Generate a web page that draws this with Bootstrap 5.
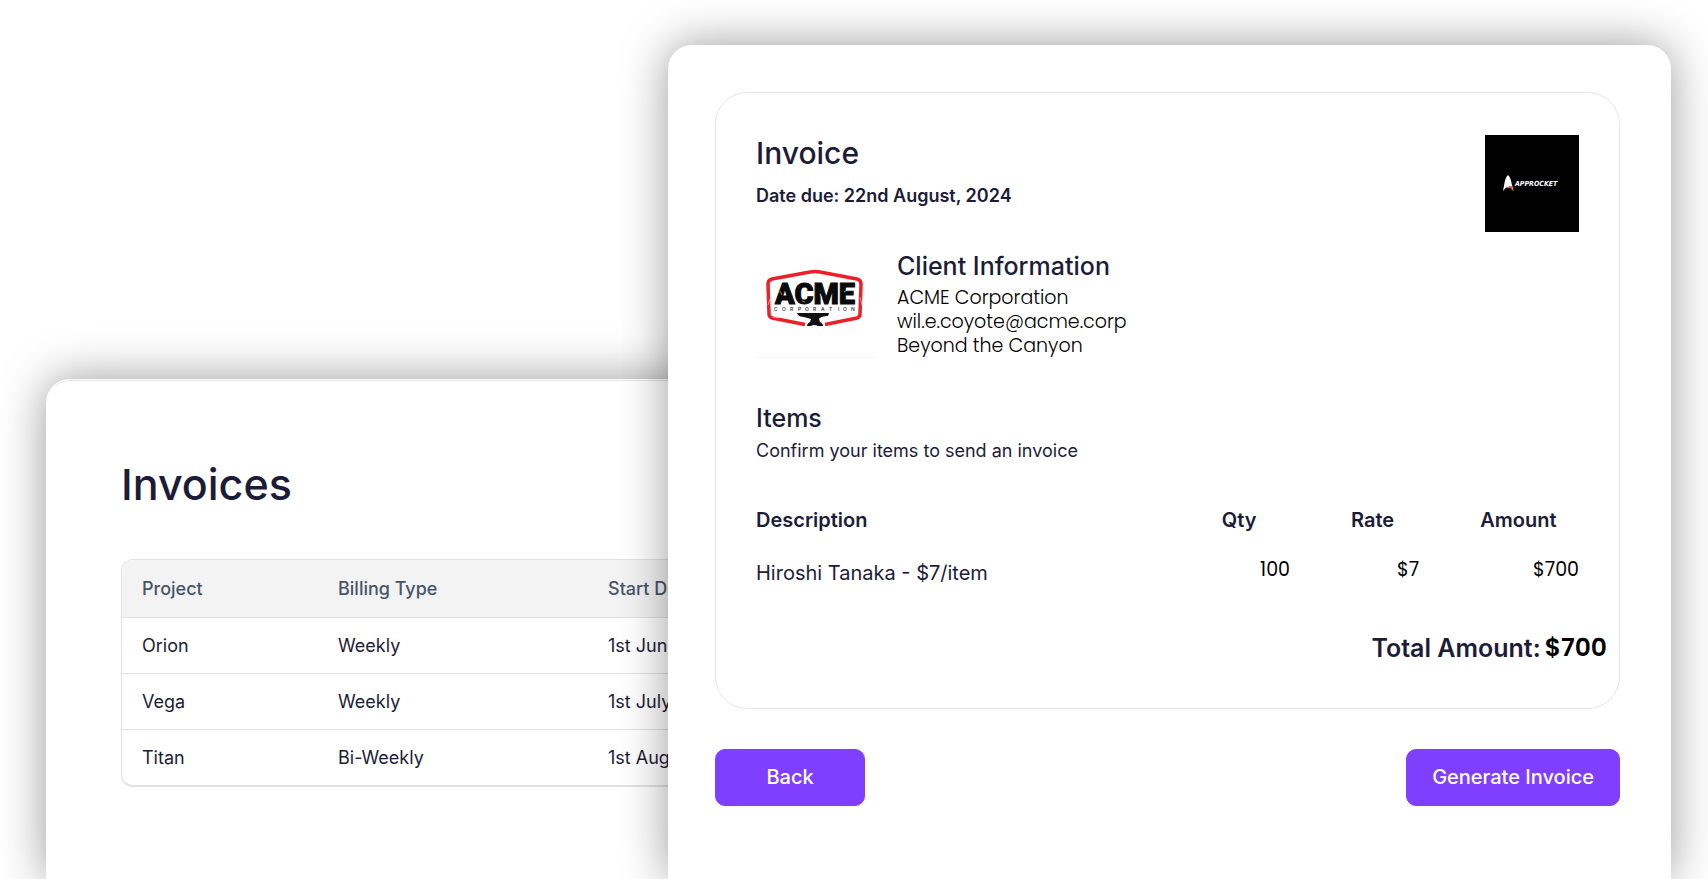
<!DOCTYPE html>
<html lang="en">
<head>
<meta charset="utf-8">
<meta name="viewport" content="width=device-width, initial-scale=1">
<title>Invoices</title>
<link href="https://cdn.jsdelivr.net/npm/bootstrap@5.3.0/dist/css/bootstrap.min.css" rel="stylesheet">
<style>
  body { font-family: Inter, sans-serif; color: #1c1c38; background: #fff; overflow-x: hidden; }
  .stage { display: grid; grid-template-columns: 622fr 1003fr; padding: 45px 37px 0 46px; }
  .sheet { grid-row: 1; background: #fff; border-radius: 24px 24px 0 0; box-shadow: 0 0 48px rgba(0, 0, 0, .4); }
  .sheet-list { grid-column: 1 / 3; margin: 334px 45% 0 0; padding: 78px 0 0 75px; box-shadow: 0 0 48px rgba(0, 0, 0, .4), inset 0 2px 0 -1px #e5e5e5; border-top: 1px solid #fff; }
  .sheet-invoice { grid-column: 2; z-index: 1; padding: 47px 51px 72px 47px; }

  .page-title { font-size: 43px; line-height: 52px; font-weight: 500; margin-bottom: 49px; }
  .list-frame { border: 1px solid #e2e2e4; border-bottom-width: 2px; border-right: 0; border-radius: 12px 0 0 12px; overflow: hidden; }
  .project-table { font-size: 18px; line-height: 24px; table-layout: fixed; white-space: nowrap; color: inherit; }
  .project-table th, .project-table td { padding: 16px 20px 15px; border-bottom: 1px solid #e2e2e4; color: inherit; background: transparent; }
  .project-table th { padding: 17px 20px 16px; font-weight: 500; color: #475569; background: #f3f3f3; }
  .project-table tbody tr:last-child td { border-bottom: 0; }
  .col-project { width: 196px; }
  .col-billing { width: 270px; }

  .invoice-frame { border: 1px solid #e5e5e7; border-radius: 32px; padding: 42px 40px 45px; }
  .invoice-title { font-size: 30px; line-height: 36px; font-weight: 500; margin-bottom: 13px; }
  .due-date { font-size: 18px; line-height: 24px; font-weight: 600; }
  .section-title { font-size: 25px; line-height: 30px; font-weight: 500; margin-bottom: 5px; }
  .entry { font-family: Poppins, Inter, sans-serif; color: #000; }
  .client-lines { font-size: 19px; line-height: 24px; font-weight: 300; }
  .client-row { margin-top: 17px; gap: 21px; }
  .items-head { margin-top: 45px; }
  .items-head .section-title { margin-bottom: 6px; }
  .items-note { font-size: 18px; line-height: 24px; }
  .items-table { font-size: 20px; line-height: 24px; margin-top: 45px; table-layout: fixed; width: 100%; }
  .items-table th { font-weight: 600; padding: 0; }
  .items-table td { padding: 29px 0 0; }
  .items-table td.entry { padding: 26px 0 3px; text-align: right; font-size: 19px; }
  .items-table td.inset-end { padding-right: 61px; }
  .col-desc { width: 56.6%; }
  .col-num { width: 15.7%; }
  .total-row { font-size: 25px; line-height: 30px; font-weight: 600; margin: 48px -28px 0 0; gap: 4px; }
  .actions { margin-top: 40px; }
  .btn-violet { --bs-btn-bg: #803fff; --bs-btn-color: #fff; --bs-btn-border-color: #803fff; --bs-btn-hover-bg: #6d2df0; --bs-btn-hover-color: #fff; --bs-btn-active-bg: #5f22dd; --bs-btn-active-color: #fff;
    font-size: 20px; line-height: 24px; font-weight: 500; border-radius: 10px; padding: 15px 25px 16px; min-width: 150px; }
</style>
</head>
<body>
<main class="stage min-vh-100">
  <section class="sheet sheet-list" aria-labelledby="list-title">
    <h1 class="page-title" id="list-title">Invoices</h1>
    <div class="list-frame">
      <table class="table project-table mb-0">
        <colgroup><col class="col-project"><col class="col-billing"><col></colgroup>
        <thead><tr><th scope="col">Project</th><th scope="col">Billing Type</th><th scope="col">Start Date</th></tr></thead>
        <tbody>
          <tr><td>Orion</td><td>Weekly</td><td>1st June</td></tr>
          <tr><td>Vega</td><td>Weekly</td><td>1st July</td></tr>
          <tr><td>Titan</td><td>Bi-Weekly</td><td>1st August</td></tr>
        </tbody>
      </table>
    </div>
  </section>

  <section class="sheet sheet-invoice" aria-labelledby="invoice-title">
    <div class="invoice-frame">
      <header class="d-flex justify-content-between align-items-start">
        <div>
          <h2 class="invoice-title" id="invoice-title">Invoice</h2>
          <p class="due-date mb-0">Date due: 22nd August, 2024</p>
        </div>
        <svg class="flex-shrink-0 d-block" width="94" height="97" viewBox="0 0 94 97" role="img" aria-label="AppRocket">
          <rect width="94" height="97" fill="#000"/>
          <path d="M23 40c2 1.500 3 5 3.500 8l2 8-3.500-3.500h-4L18 56l1.500-8c.5-3 1.500-6.500 3.500-8z" fill="#fff"/>
          <path d="M23 51.500l3.500-.5 2 5.500-3-3.500z" fill="#e8391d"/>
          <text x="30" y="51" font-family="'DejaVu Sans Condensed', 'DejaVu Sans', sans-serif" font-size="7" font-weight="700" font-style="italic" fill="#fff">APPROCKET</text>
        </svg>
      </header>

      <div class="client-row d-flex align-items-end">
        <svg class="flex-shrink-0 d-block" width="120" height="109" viewBox="0 0 120 109" role="img" aria-label="ACME Corporation">
          <path d="M49 75.500L16 69q-3-1-3-4l-1-30q0-4 4-5l38-7q5-1 10 0l37 7q4 1 4 5l-1 30q0 3-3 4l-32 6.500" fill="none" stroke="#ea2128" stroke-width="3.500"/>
          <text x="59" y="55" text-anchor="middle" font-family="Roboto, sans-serif" font-size="29" font-weight="900" fill="#0a0a0a" stroke="#0a0a0a" stroke-width="1">ACME</text>
          <text x="18 26 34 42 49 57 65 73 82 87 95" y="62" font-family="Inter, sans-serif" font-size="5" font-weight="500" fill="#222">CORPORATION</text>
          <path d="M41 64h32l-1 3c-4 0-8 1-9 3l1 3c2 1 3 2 3 4h-5q-4-2-7 0h-4c0-2 1-3 3-4l1-3c-2-1-5-1-7-2-3 0-6-1-7-4z" fill="#111"/>
          <path d="M24 42l2 4m2 7l-3 1m24-16l2 3m-5 11l3 1m15-8l2 4m16 2l2 4m7-14l-3 2M17 68l6 1m58 1l8-2M14 50l-2 6m92-8l2 8" stroke="#fff" stroke-width=".7" opacity=".7"/>
          <path d="M0 108.500h120" stroke="#f5f5f5"/>
        </svg>
        <div>
          <h3 class="section-title">Client Information</h3>
          <div class="client-lines entry">
            <div>ACME Corporation</div>
            <div>wil.e.coyote@acme.corp</div>
            <div>Beyond the Canyon</div>
          </div>
        </div>
      </div>

      <div class="items-head">
        <h3 class="section-title">Items</h3>
        <p class="items-note mb-0">Confirm your items to send an invoice</p>
      </div>
      <table class="items-table">
        <colgroup><col class="col-desc"><col class="col-num"><col class="col-num"><col></colgroup>
        <thead><tr><th scope="col">Description</th><th scope="col">Qty</th><th scope="col">Rate</th><th scope="col">Amount</th></tr></thead>
        <tbody><tr><td>Hiroshi Tanaka - $7/item</td><td class="entry inset-end">100</td><td class="entry inset-end">$7</td><td class="entry">$700</td></tr></tbody>
      </table>
      <div class="total-row d-flex justify-content-end">
        <span>Total Amount:</span><span class="entry">$700</span>
      </div>
    </div>
    <div class="actions d-flex justify-content-between">
      <button type="button" class="btn btn-violet">Back</button>
      <button type="button" class="btn btn-violet">Generate Invoice</button>
    </div>
  </section>
</main>
<script src="https://cdn.jsdelivr.net/npm/bootstrap@5.3.0/dist/js/bootstrap.bundle.min.js"></script>
</body>
</html>
